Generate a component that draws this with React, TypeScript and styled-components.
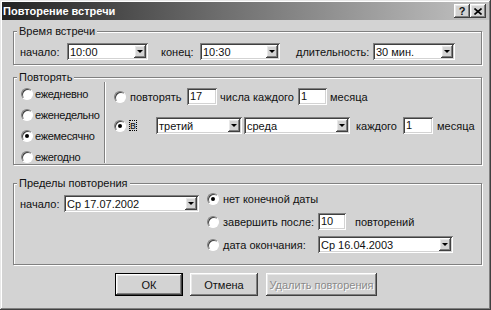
import React from "react";
import styled, { createGlobalStyle, css } from "styled-components";

const face = "#d3d3d3";

const GlobalStyle = createGlobalStyle`
  html, body {
    margin: 0;
    padding: 0;
    background: ${face};
  }
  body {
    font-family: "Liberation Sans", Arial, sans-serif;
    font-size: 11px;
    color: #111;
  }
`;

const raised = css`
  background: ${face};
  box-shadow: inset -1px -1px 0 #404040, inset 1px 1px 0 #fff,
    inset -2px -2px 0 #808080, inset 2px 2px 0 #e8e8e8;
`;

const sunken = css`
  background: #fff;
  box-shadow: inset 1px 1px 0 #808080, inset -1px -1px 0 #fff,
    inset 2px 2px 0 #404040, inset -2px -2px 0 ${face};
`;

const Window = styled.div`
  width: 491px;
  height: 310px;
  box-sizing: border-box;
  padding: 2px;
  background: ${face};
  box-shadow: inset -1px -1px 0 #404040, inset 1px 1px 0 #e8e8e8,
    inset -2px -2px 0 #808080, inset 2px 2px 0 #fff;
  display: flex;
  flex-direction: column;
`;

const TitleBar = styled.div`
  height: 18px;
  flex: none;
  display: flex;
  align-items: center;
  justify-content: space-between;
  padding: 0 3px 0 1px;
  background: linear-gradient(90deg, #222 0%, #6e6e6e 45%, #c3c3c3 100%);
`;

const Title = styled.span`
  color: #fff;
  font-weight: bold;
  font-size: 11px;
  white-space: nowrap;
`;

const CapButtons = styled.div`
  display: flex;
`;

const CapButton = styled.span`
  ${raised};
  width: 16px;
  height: 14px;
  display: flex;
  align-items: center;
  justify-content: center;
  font-weight: bold;
  font-size: 11px;
  line-height: 1;
`;

const Body = styled.div`
  padding: 11px 7px 0 11px;
  display: flex;
  flex-direction: column;
`;

const Group = styled.div<{ $mt?: number }>`
  border: 1px solid #808080;
  box-shadow: inset 1px 1px 0 #fff, 1px 1px 0 #fff;
  margin-top: ${(p) => p.$mt ?? 0}px;
`;

const Caption = styled.div`
  width: fit-content;
  margin: -7px 0 -6px 3px;
  padding: 0 2px;
  line-height: 13px;
  background: ${face};
  white-space: nowrap;
`;

const TimeRow = styled.div`
  display: flex;
  align-items: center;
  height: 17px;
  margin: 11px 0 4px;
  padding-left: 6px;
`;

const Label = styled.span<{ $w?: number; $ml?: number }>`
  display: inline-block;
  flex: none;
  white-space: nowrap;
  ${(p) => (p.$w ? `width: ${p.$w}px;` : "")}
  margin-left: ${(p) => p.$ml ?? 0}px;
`;

const ComboBox = styled.div<{ $w: number; $ml?: number }>`
  ${sunken};
  flex: none;
  box-sizing: border-box;
  width: ${(p) => p.$w}px;
  height: 17px;
  margin-left: ${(p) => p.$ml ?? 0}px;
  padding: 2px;
  display: flex;
  align-items: center;
`;

const ComboText = styled.span`
  flex: 1;
  padding-left: 1px;
  white-space: nowrap;
  overflow: hidden;
`;

const DropButton = styled.span`
  ${raised};
  flex: none;
  width: 12px;
  height: 13px;
  display: flex;
  align-items: center;
  justify-content: center;
  &::after {
    content: "";
    width: 0;
    height: 0;
    border-left: 3px solid transparent;
    border-right: 3px solid transparent;
    border-top: 3px solid #000;
  }
`;

const Field = styled.div<{ $w: number; $ml?: number }>`
  ${sunken};
  flex: none;
  box-sizing: border-box;
  width: ${(p) => p.$w}px;
  height: 17px;
  margin-left: ${(p) => p.$ml ?? 0}px;
  padding: 0 3px;
  line-height: 17px;
`;

const Split = styled.div`
  display: flex;
  height: 81px;
  margin: 4px 0 1px;
`;

const Options = styled.div`
  width: 90px;
  box-sizing: border-box;
  padding: 6px 0 0 7px;
  display: flex;
  flex-direction: column;
  gap: 8px;
  letter-spacing: -0.3px;
`;

const RadioRow = styled.div<{ $h?: number }>`
  display: flex;
  align-items: center;
  height: ${(p) => p.$h ?? 13}px;
  white-space: nowrap;
`;

const Radio = styled.span<{ $on?: boolean; $mr?: number }>`
  flex: none;
  position: relative;
  width: 12px;
  height: 12px;
  box-sizing: border-box;
  border-radius: 50%;
  background: #fff;
  border: 1px solid;
  border-color: #808080 #fff #fff #808080;
  box-shadow: inset 1px 1px 0 #404040;
  margin-right: ${(p) => p.$mr ?? 2}px;
  ${(p) =>
    p.$on &&
    css`
      &::after {
        content: "";
        position: absolute;
        left: 3px;
        top: 3px;
        width: 4px;
        height: 4px;
        border-radius: 50%;
        background: #000;
      }
    `}
`;

const VSep = styled.div`
  width: 0;
  border-left: 1px solid #808080;
  border-right: 1px solid #fff;
`;

const Pattern = styled.div`
  padding: 6px 0 0 8px;
  display: flex;
  flex-direction: column;
  gap: 12px;
`;

const FocusLabel = styled.span`
  flex: none;
  width: 8px;
  height: 11px;
  box-sizing: border-box;
  border: 1px dotted #000;
  line-height: 9px;
  text-align: center;
  margin-left: 1px;
`;

const Limits = styled.div`
  display: flex;
  padding: 6px 0 11px 6px;
`;

const StartBlock = styled.div`
  display: flex;
  align-items: center;
  height: 17px;
  margin-top: 5px;
`;

const EndBlock = styled.div`
  margin-left: 8px;
  display: flex;
  flex-direction: column;
  gap: 6px;
`;

const ButtonRow = styled.div`
  display: flex;
  margin-top: 8px;
  padding-left: 102px;
`;

const Button = styled.div<{ $w: number; $ml?: number; $default?: boolean; $disabled?: boolean }>`
  ${raised};
  box-sizing: border-box;
  width: ${(p) => p.$w}px;
  height: 23px;
  margin-left: ${(p) => p.$ml ?? 0}px;
  display: flex;
  align-items: center;
  justify-content: center;
  white-space: nowrap;
  ${(p) =>
    p.$default &&
    css`
      border: 1px solid #000;
    `}
  ${(p) =>
    p.$disabled &&
    css`
      color: #8a8a8a;
      text-shadow: 1px 1px 0 #fff;
    `}
`;

function Combo({ w, ml, value }: { w: number; ml?: number; value: string }) {
  return (
    <ComboBox $w={w} $ml={ml}>
      <ComboText>{value}</ComboText>
      <DropButton />
    </ComboBox>
  );
}

export default function App() {
  return (
    <>
      <GlobalStyle />
      <Window>
        <TitleBar>
          <Title>Повторение встречи</Title>
          <CapButtons>
            <CapButton>?</CapButton>
            <CapButton>
              <svg width="8" height="7" viewBox="0 0 8 7">
                <path d="M0.5 0.5 L7.5 6.5 M7.5 0.5 L0.5 6.5" stroke="#000" strokeWidth="1.6" />
              </svg>
            </CapButton>
          </CapButtons>
        </TitleBar>
        <Body>
          <Group>
            <Caption>Время встречи</Caption>
            <TimeRow>
              <Label $w={47}>начало:</Label>
              <Combo w={81} value="10:00" />
              <Label $w={39} $ml={13}>конец:</Label>
              <Combo w={80} value="10:30" />
              <Label $w={77} $ml={16}>длительность:</Label>
              <Combo w={82} value="30 мин." />
            </TimeRow>
          </Group>

          <Group $mt={12}>
            <Caption>Повторять</Caption>
            <Split>
              <Options>
                <RadioRow><Radio />ежедневно</RadioRow>
                <RadioRow><Radio />еженедельно</RadioRow>
                <RadioRow><Radio $on />ежемесячно</RadioRow>
                <RadioRow><Radio />ежегодно</RadioRow>
              </Options>
              <VSep />
              <Pattern>
                <RadioRow $h={17}>
                  <Radio $mr={4} />
                  <Label $w={57}>повторять</Label>
                  <Field $w={30}>17</Field>
                  <Label $w={78} $ml={3}>числа каждого</Label>
                  <Field $w={29}>1</Field>
                  <Label $ml={3}>месяца</Label>
                </RadioRow>
                <RadioRow $h={17}>
                  <Radio $on $mr={2} />
                  <FocusLabel>в</FocusLabel>
                  <Combo w={86} ml={19} value="третий" />
                  <Combo w={106} ml={2} value="среда" />
                  <Label $w={47} $ml={6}>каждого</Label>
                  <Field $w={30}>1</Field>
                  <Label $ml={4}>месяца</Label>
                </RadioRow>
              </Pattern>
            </Split>
          </Group>

          <Group $mt={18}>
            <Caption>Пределы повторения</Caption>
            <Limits>
              <StartBlock>
                <Label $w={44}>начало:</Label>
                <Combo w={135} value="Ср 17.07.2002" />
              </StartBlock>
              <EndBlock>
                <RadioRow $h={17}>
                  <Radio $on $mr={4} />
                  нет конечной даты
                </RadioRow>
                <RadioRow $h={17}>
                  <Radio $mr={4} />
                  <Label $w={95}>завершить после:</Label>
                  <Field $w={28}>10</Field>
                  <Label $ml={9}>повторений</Label>
                </RadioRow>
                <RadioRow $h={17}>
                  <Radio $mr={4} />
                  <Label $w={95}>дата окончания:</Label>
                  <Combo w={135} value="Ср 16.04.2003" />
                </RadioRow>
              </EndBlock>
            </Limits>
          </Group>

          <ButtonRow>
            <Button $w={68} $default>ОК</Button>
            <Button $w={68} $ml={7}>Отмена</Button>
            <Button $w={111} $ml={8} $disabled>Удалить повторения</Button>
          </ButtonRow>
        </Body>
      </Window>
    </>
  );
}
